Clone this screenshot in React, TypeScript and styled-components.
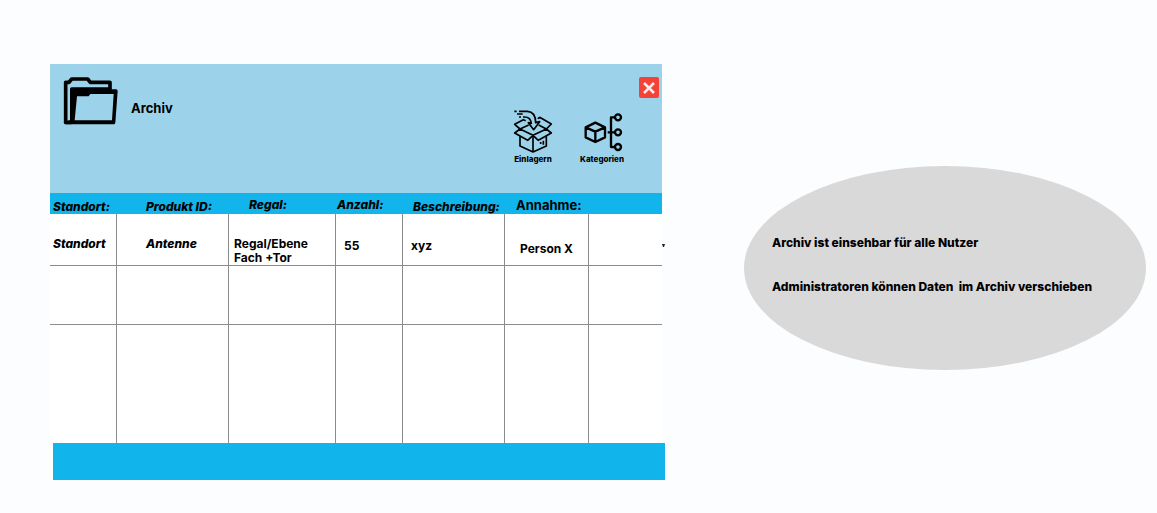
import React from 'react';
import styled, { createGlobalStyle } from 'styled-components';

const GlobalStyle = createGlobalStyle`
  *, *::before, *::after { box-sizing: border-box; }
  body {
    margin: 0;
    background: #fcfdfe;
    color: #000;
    font: 700 12px/14px Inter, "Liberation Sans", sans-serif;
  }
`;

const Page = styled.main`
  display: grid;
  grid-template-columns: minmax(0, 612fr) minmax(0, 402fr);
  column-gap: 82px;
  align-items: start;
  padding: 64px 11px 32px 50px;
`;

const Panel = styled.section`
  background: #fff;
`;

const PanelHeader = styled.header`
  display: flex;
  justify-content: space-between;
  align-items: flex-start;
  min-height: 129px;
  padding: 13px 3px 0 13px;
  background: #9dd3ea;
`;

const TitleGroup = styled.div`
  display: flex;
  align-items: center;
  gap: 13px;
`;

const Title = styled.h1`
  margin: 14px 0 0;
  font-size: 13px;
  line-height: 16px;
  font-weight: 700;
`;

const HeaderTools = styled.div`
  display: flex;
  flex-direction: column;
  align-items: flex-end;
  gap: 11px;
`;

const CloseButton = styled.button`
  display: grid;
  place-items: center;
  width: 20px;
  height: 21px;
  padding: 0;
  border: 0;
  border-radius: 2px;
  background: #f44336;
  cursor: pointer;
`;

const Actions = styled.nav`
  display: flex;
  gap: 27px;
  padding-right: 35px;
`;

const ActionButton = styled.button`
  display: flex;
  flex-direction: column;
  align-items: center;
  padding: 0;
  border: 0;
  background: none;
  color: inherit;
  font: 800 8px/12px Inter, "Liberation Sans", sans-serif;
  cursor: pointer;
`;

const Table = styled.table`
  width: 100%;
  table-layout: fixed;
  border-spacing: 0;
`;

const Column = styled.col<{ $share: number }>`
  width: ${(p) => (p.$share / 612) * 100}%;
`;

const HeadCell = styled.th<{ $inset: number; $upright?: boolean; $raised?: boolean }>`
  height: 21px;
  padding: ${(p) => (p.$raised ? 5 : 7)}px 0 0 ${(p) => p.$inset}px;
  background: #11b4eb;
  font-size: ${(p) => (p.$upright ? 13 : 12)}px;
  line-height: 14px;
  font-weight: ${(p) => (p.$upright ? 700 : 800)};
  font-style: ${(p) => (p.$upright ? 'normal' : 'italic')};
  text-align: left;
  vertical-align: top;
  white-space: nowrap;
`;

const Row = styled.tr<{ $height: number; $last?: boolean }>`
  height: ${(p) => p.$height}px;

  td {
    border-bottom: ${(p) => (p.$last ? 0 : 1)}px solid #8c8c8c;
  }
  td + td {
    border-left: 1px solid #8c8c8c;
  }
`;

const Cell = styled.td<{ $inset?: number; $top?: number; $italic?: boolean }>`
  position: relative;
  padding: ${(p) => p.$top ?? 0}px 0 0 ${(p) => p.$inset ?? 0}px;
  font-weight: ${(p) => (p.$italic ? 800 : 700)};
  font-style: ${(p) => (p.$italic ? 'italic' : 'normal')};
  vertical-align: top;
  white-space: nowrap;
`;

const EdgeMark = styled.svg`
  position: absolute;
  top: 30px;
  right: -3px;
`;

const PanelFooter = styled.footer`
  height: 37px;
  margin: 0 -3px 0 3px;
  background: #11b4eb;
`;

const Note = styled.aside`
  display: flex;
  flex-direction: column;
  gap: 30px;
  min-height: 204px;
  margin-top: 102px;
  padding: 70px 28px 0;
  border-radius: 50%;
  background: #d9d9d9;
`;

const NoteLine = styled.p`
  margin: 0;
  font-weight: 800;
  white-space: pre;
`;

const FolderIcon = () => (
  <svg width="55" height="48" viewBox="54 50 165 144" aria-hidden="true">
    <path
      d="M195 86V66H136L128 56H80L72 66H62V186H80"
      fill="none"
      stroke="#000"
      strokeWidth="11"
      strokeLinejoin="round"
    />
    <path
      fillRule="evenodd"
      d="M80 81H197L200 87H213Q218 87 218 92L211 187Q210 192 206 192H62Q56 192 56 186L75 180V87Q75 81 80 81ZM96 108H131L136 101H206L201 180H89Z"
    />
  </svg>
);

const StoreIcon = () => (
  <svg
    width="40"
    height="44"
    viewBox="39 27 120 132"
    fill="none"
    stroke="#000"
    strokeWidth="5"
    strokeLinejoin="round"
    aria-hidden="true"
  >
    <path d="M60 109V138L99 156L139 138V109M99 107V156" />
    <path d="M60 87L99 106L139 87L154 99L115 121L99 106L83 121L44 99L60 87" />
    <path d="M60 87L44 73L70 59L77 62M60 87L86 75M139 87L154 72L119 52L113 56M139 87L116 75" />
    <path d="M57 34H82C99 35 107 47 107 68L119 65L101 89L85 68L94 70C93 58 87 51 73 51H69" />
    <path d="M43 34H50M51 42H68M57 51H63" />
    <path d="M122 126V132M130 122V134" />
  </svg>
);

const CategoryIcon = () => (
  <svg
    width="44"
    height="44"
    viewBox="240 27 132 132"
    fill="none"
    stroke="#000"
    strokeWidth="7"
    strokeLinejoin="round"
    aria-hidden="true"
  >
    <path d="M286 68L315 82V112L286 126L257 112V82ZM257 82L286 95L315 82M286 95V126" />
    <path d="M323 97H345M345 52H333V141H345" />
    <circle cx="354" cy="52" r="9" />
    <circle cx="354" cy="97" r="9" />
    <circle cx="354" cy="141" r="9" />
  </svg>
);

const columnShares = [66, 112, 107, 67, 102, 84, 74];

export default function App() {
  return (
    <>
      <GlobalStyle />
      <Page>
        <Panel>
          <PanelHeader>
            <TitleGroup>
              <FolderIcon />
              <Title>Archiv</Title>
            </TitleGroup>
            <HeaderTools>
              <CloseButton type="button" aria-label="Schließen">
                <svg width="12" height="12" viewBox="0 0 12 12" aria-hidden="true">
                  <path d="M1 1L11 11M11 1L1 11" stroke="#fbe9e7" strokeWidth="2.6" />
                </svg>
              </CloseButton>
              <Actions>
                <ActionButton type="button">
                  <StoreIcon />
                  Einlagern
                </ActionButton>
                <ActionButton type="button">
                  <CategoryIcon />
                  Kategorien
                </ActionButton>
              </Actions>
            </HeaderTools>
          </PanelHeader>

          <Table>
            <colgroup>
              {columnShares.map((share, i) => (
                <Column key={i} $share={share} />
              ))}
            </colgroup>
            <thead>
              <tr>
                <HeadCell $inset={3}>Standort:</HeadCell>
                <HeadCell $inset={30}>Produkt ID:</HeadCell>
                <HeadCell $inset={21} $raised>Regal:</HeadCell>
                <HeadCell $inset={2} $raised>Anzahl:</HeadCell>
                <HeadCell $inset={11}>Beschreibung:</HeadCell>
                <HeadCell $inset={12} $upright $raised>Annahme:</HeadCell>
                <HeadCell $inset={0} />
              </tr>
            </thead>
            <tbody>
              <Row $height={52}>
                <Cell $inset={3} $top={23} $italic>Standort</Cell>
                <Cell $inset={29} $top={23} $italic>Antenne</Cell>
                <Cell $inset={5} $top={23}>
                  Regal/Ebene
                  <br />
                  Fach +Tor
                </Cell>
                <Cell $inset={8} $top={25}>55</Cell>
                <Cell $inset={8} $top={25}>xyz</Cell>
                <Cell $inset={15} $top={28}>Person X</Cell>
                <Cell>
                  <EdgeMark width="3" height="3" viewBox="0 0 3 3" aria-hidden="true">
                    <path d="M0 0H3L2 3H1Z" fill="#222" />
                  </EdgeMark>
                </Cell>
              </Row>
              <Row $height={59}>
                {columnShares.map((_, i) => (
                  <Cell key={i} />
                ))}
              </Row>
              <Row $height={118} $last>
                {columnShares.map((_, i) => (
                  <Cell key={i} />
                ))}
              </Row>
            </tbody>
          </Table>
          <PanelFooter />
        </Panel>

        <Note>
          <NoteLine>Archiv ist einsehbar für alle Nutzer</NoteLine>
          <NoteLine>{'Administratoren können Daten  im Archiv verschieben'}</NoteLine>
        </Note>
      </Page>
    </>
  );
}
